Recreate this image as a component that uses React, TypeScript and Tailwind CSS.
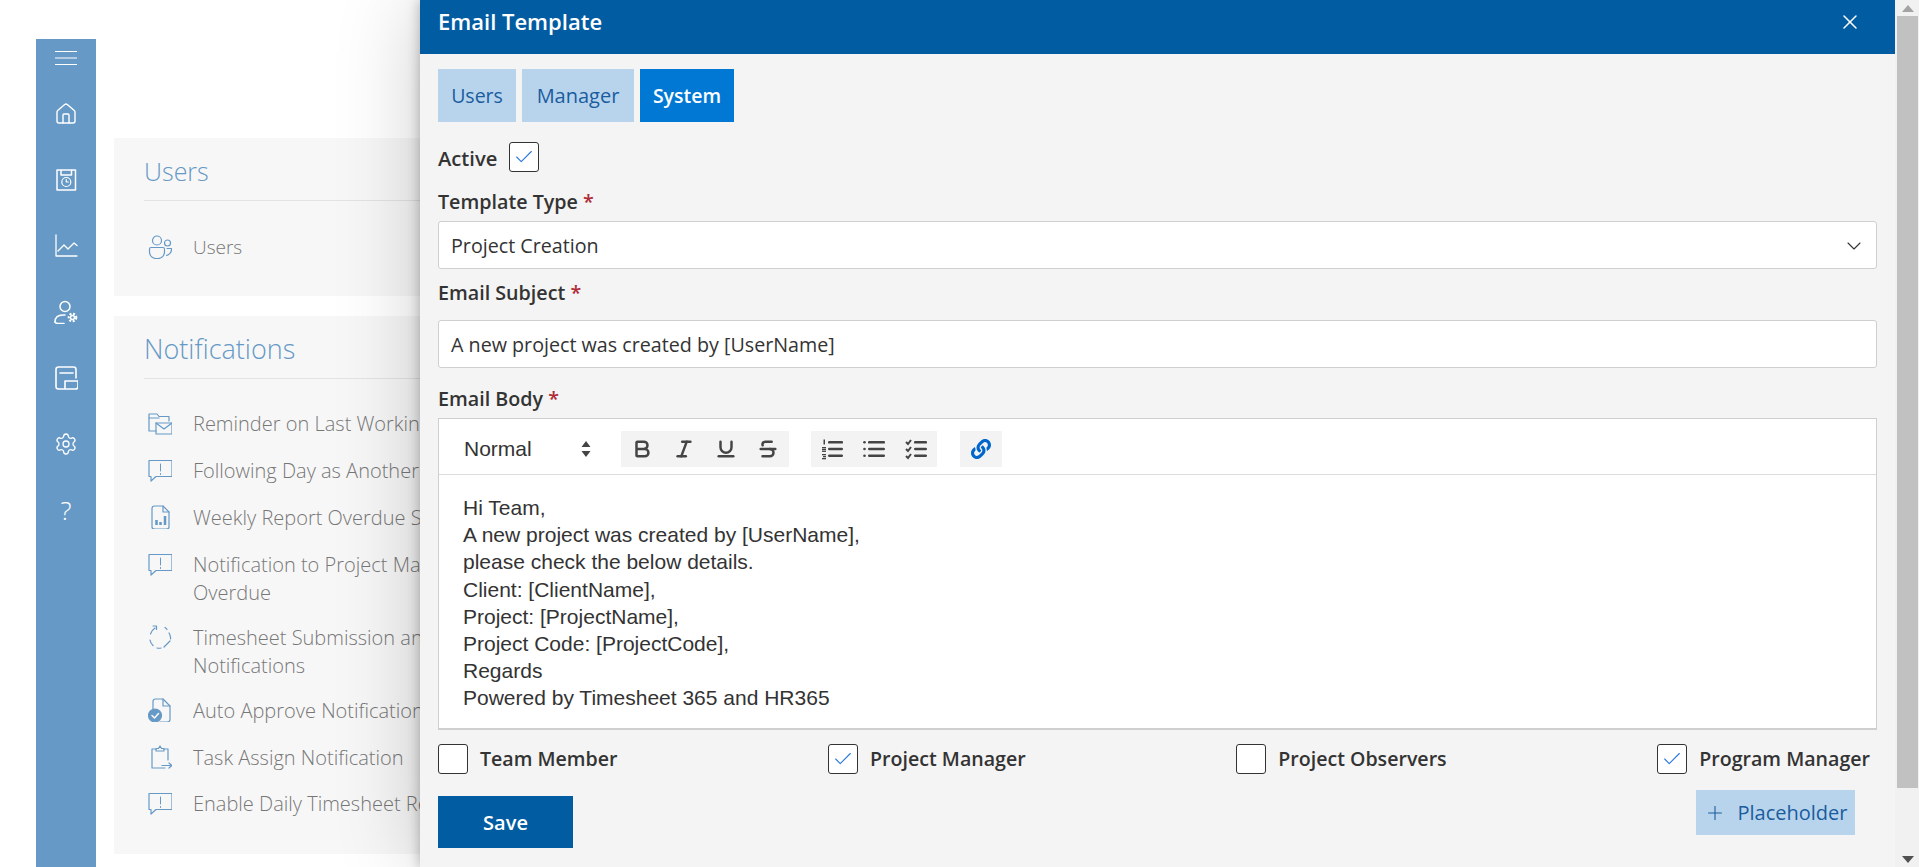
import React from 'react';
import { Home, Settings, Bold, Italic, Underline, Strikethrough, ChevronDown, X, Plus, Check } from 'lucide-react';
import { FaLink } from 'react-icons/fa';

const S = (p: { children: React.ReactNode; size?: number; vb?: number; w?: number }) => (
  <svg width={p.size ?? 24} height={p.size ?? 24} viewBox={`0 0 ${p.vb ?? 24} ${p.vb ?? 24}`} fill="none" stroke="currentColor" strokeWidth={p.w ?? 1.2} strokeLinecap="round" strokeLinejoin="round">{p.children}</svg>
);

const Bubble = () => (
  <S>
    <path d="M1 2.500h23v16H8l-5 4.500v-4.500H1z" />
    <path d="M12.500 6v7M12.500 15.500v1" strokeWidth={1} />
  </S>
);
const MailFolder = () => (
  <S>
    <path d="M1 20V3h8l2 2.500h10V10M1 20h7" />
    <path d="M1 7h10" />
    <rect x="8" y="12" width="16" height="11" />
    <path d="M8 12l8 6 8-6" />
  </S>
);
const ReportDoc = () => (
  <S>
    <path d="M4 3.500Q4 1 6.500 1H15l6 6v15Q21 24 18.500 24h-12Q4 24 4 22z" />
    <path d="M15 1v6h6" />
    <path d="M8.500 20v-5M12.500 20v-3M17 20v-9" strokeWidth={2.500} strokeLinecap="butt" />
  </S>
);
const DashCircle = () => (
  <S>
    <path d="M2.500 9A11 11 0 0 1 7 3M2 15q.5 3 3 5.500M9 23q2 .5 4 0M21 8q2 3 1.500 6M17 2.500q1 .5 2 2M16 22l6-6" />
    <path d="M5 1h3.500v3.500" />
  </S>
);
const ApproveDoc = () => (
  <S>
    <path d="M5 11V3.500Q5 1 7.500 1H15l7 7v13.500Q22 24 19 24h-7" />
    <path d="M15 1v7h7" />
    <circle cx="7" cy="17.500" r="6.500" fill="currentColor" />
    <path d="M4 17.500l2.500 2.500 4-4.500" stroke="#f7f7f7" strokeWidth={1.600} />
  </S>
);
const TaskAssign = () => (
  <S>
    <path d="M8 4H4v19h13M20 15V4h-4" />
    <path d="M8 6V3.500h2.500L12 1l1.500 2.500H16V6z" />
    <path d="M14 20.500h10M21 18l3 2.500-3 2.500" />
  </S>
);
const UsersIcon = () => (
  <S>
    <circle cx="9" cy="5.500" r="4.500" />
    <circle cx="19.500" cy="8" r="3" />
    <path d="M1.500 14q0-1.500 1.500-1.500h12q1.500 0 1.500 1.500v3a6.500 6.500 0 0 1-6.500 6.500H8A6.500 6.500 0 0 1 1.500 17zM19 13.500h4.500q.5 5-5 7" />
  </S>
);

const rows: { icon: React.ReactNode; lines: string[]; h: string }[] = [
  { icon: <MailFolder />, lines: ['Reminder on Last Working'], h: 'h-[47px]' },
  { icon: <Bubble />, lines: ['Following Day as Another'], h: 'h-[47px]' },
  { icon: <ReportDoc />, lines: ['Weekly Report Overdue Submission'], h: 'h-[47px]' },
  { icon: <Bubble />, lines: ['Notification to Project Manager', 'Overdue'], h: 'h-[73px]' },
  { icon: <DashCircle />, lines: ['Timesheet Submission and', 'Notifications'], h: 'h-[73px]' },
  { icon: <ApproveDoc />, lines: ['Auto Approve Notification'], h: 'h-[47px]' },
  { icon: <TaskAssign />, lines: ['Task Assign Notification'], h: 'h-[46px]' },
  { icon: <Bubble />, lines: ['Enable Daily Timesheet Reminder'], h: 'h-[46px]' },
];

const Row = ({ icon, lines, h }: { icon: React.ReactNode; lines: string[]; h: string }) => (
  <div className={`flex items-start ${h} pt-[12px]`}>
    <div className="w-[49px] pl-[4px] pt-[2px] text-[#6699c6] shrink-0">{icon}</div>
    <div className="w-[227px] overflow-hidden text-[20px] leading-[28px] pt-[1px] font-light text-[#777] whitespace-nowrap">
      {lines.map((l) => <div key={l}>{l}</div>)}
    </div>
  </div>
);

const Box = ({ on }: { on?: boolean }) => (
  <span className="flex items-center justify-center bg-white border border-[#333] rounded-[3px] shrink-0 w-[30px] h-[30px]">
    {on && <Check size={22} strokeWidth={1.200} className="text-[#2a78e0]" />}
  </span>
);

const Star = () => <span className="text-[#b02a37]"> *</span>;

const Tool = ({ children, w }: { children: React.ReactNode; w: string }) => (
  <span className={`flex items-center justify-center h-[36px] ${w} text-[#444]`}>{children}</span>
);

const OrderedIcon = () => (
  <svg width="22" height="22" viewBox="0 0 22 22"><g fill="#444"><rect x="7" y="3" width="15" height="2.600" rx="1.200" /><rect x="7" y="9.700" width="15" height="2.600" rx="1.200" /><rect x="7" y="16.400" width="15" height="2.600" rx="1.200" /><rect x="2.500" y="1.500" width="1.500" height="5" /><rect x="1" y="9" width="4" height="1.300" /><rect x="1" y="10.800" width="4" height="1.300" /><rect x="1" y="12.600" width="4" height="1.300" /><rect x="1" y="16" width="4" height="1.300" /><rect x="2" y="18" width="3" height="1.300" /><rect x="1" y="20" width="4" height="1.300" /></g></svg>
);
const BulletIcon = () => (
  <svg width="22" height="22" viewBox="0 0 22 22"><g fill="#444"><rect x="5" y="3" width="17" height="2.600" rx="1.200" /><rect x="5" y="9.700" width="17" height="2.600" rx="1.200" /><rect x="5" y="16.400" width="17" height="2.600" rx="1.200" /><circle cx="1.500" cy="4.300" r="1.300" /><circle cx="1.500" cy="11" r="1.300" /><circle cx="1.500" cy="17.700" r="1.300" /></g></svg>
);
const CheckListIcon = () => (
  <svg width="22" height="22" viewBox="0 0 22 22"><g fill="#444"><rect x="9" y="3" width="13" height="2.600" rx="1.200" /><rect x="9" y="9.700" width="13" height="2.600" rx="1.200" /><rect x="9" y="16.400" width="13" height="2.600" rx="1.200" /></g><g fill="none" stroke="#444" strokeWidth="2"><path d="M1 4l2 2 3-4M1 11l2 2 3-4M1 18l2 2 3-4" /></g></svg>
);

const RoleCheck = ({ label, on }: { label: string; on?: boolean }) => (
  <label className="flex items-center gap-[12px]">
    <Box on={on} />
    <span className="text-[19.600px] font-[550] text-[#333] whitespace-nowrap">{label}</span>
  </label>
);

export default function App() {
  return (
    <div className="flex h-[867px] w-full overflow-hidden bg-white text-[#333] font-['Open_Sans',sans-serif]">
      <div className="relative flex-1 flex min-w-0 overflow-hidden">
        {/* Background page */}
        <aside className="ml-[36px] mt-[39px] w-[60px] h-[828px] bg-[#6699c6] text-white flex flex-col items-center shrink-0">
          <div className="h-[42px] pb-[4px] flex items-center justify-center">
            <svg width="22" height="16" viewBox="0 0 22 16" stroke="currentColor" strokeWidth="1.200"><path d="M0 1.500h22M0 8h22M0 14.500h22" /></svg>
          </div>
          <div className="h-[66px] flex items-center justify-center"><Home size={24} strokeWidth={1.400} /></div>
          <div className="h-[66px] pb-[2px] flex items-center justify-center">
            <S size={24}><path d="M3 3h18.500v20H3zM7 3v5h10.500V3" strokeWidth={1.500} /><circle cx="12.300" cy="15" r="4.500" /><path d="M12.300 12.500V15h2" /></S>
          </div>
          <div className="h-[66px] flex items-center justify-center">
            <S size={24}><path d="M2 1v21h21M4 17l6-6 4 4 6-6 3 2.500" strokeWidth={1.300} /></S>
          </div>
          <div className="h-[66px] flex items-center justify-center">
            <S size={24}><circle cx="11" cy="6.500" r="5" strokeWidth={1.500} /><path d="M1 22q0-7 8-7h2" strokeWidth={1.500} /><path d="M1 22q1 1.500 3 1.500h6" strokeWidth={1.500} /><circle cx="18.500" cy="17.500" r="2.800" fill="currentColor" stroke="none" /><circle cx="18.500" cy="17.500" r="3.800" strokeWidth={2} strokeDasharray="2 1.600" strokeLinecap="butt" /><circle cx="18.500" cy="17.500" r="1.200" fill="#6699c6" stroke="none" /></S>
          </div>
          <div className="h-[66px] flex items-center justify-center">
            <S size={24}><path d="M22 12V3.500Q22 1 19.500 1h-15Q2 1 2 3.500v17Q2 23 4.500 23h17Q24 23 24 20.500V15H11v8" strokeWidth={1.600} /><path d="M6 7h13" strokeWidth={1.600} /></S>
          </div>
          <div className="h-[66px] flex items-center justify-center"><Settings size={24} strokeWidth={1.300} /></div>
          <div className="h-[66px] flex items-center justify-center text-[26px] font-light">?</div>
        </aside>

        <main className="ml-[18px] mt-[138px] w-[900px] shrink-0 flex flex-col gap-[20px]">
          <section className="h-[158px] bg-[#f7f7f7] px-[30px]">
            <h2 className="h-[63px] flex items-center pt-[5px] text-[25px] font-light text-[#6699c6] border-b border-[#e3e3e3]">Users</h2>
            <div className="flex items-center mt-[32px]">
              <div className="w-[49px] pl-[4px] text-[#6699c6]"><UsersIcon /></div>
              <span className="text-[19px] font-light text-[#777]">Users</span>
            </div>
          </section>
          <section className="h-[538px] bg-[#f7f7f7] px-[30px]">
            <h2 className="h-[63px] flex items-center pt-[5px] text-[27px] font-light text-[#6699c6] border-b border-[#e3e3e3]">Notifications</h2>
            <div className="pt-[18px]">
              {rows.map((r, i) => <Row key={i} {...r} />)}
            </div>
          </section>
        </main>

        {/* Slide-over panel */}
        <div className="absolute top-0 right-0 h-full w-[1475px] bg-[#f4f4f4] flex flex-col shadow-[0_0_12px_rgba(0,0,0,0.28),0_0_80px_rgba(0,0,0,0.2)]">
          <header className="h-[54px] bg-[#015ca1] text-white flex items-center justify-between pl-[18px] pr-[33px] pb-[10px] shrink-0">
            <h1 className="text-[22px] font-semibold pb-[2px]">Email Template</h1>
            <X size={24} strokeWidth={1.500} />
          </header>

          <div className="flex-1 px-[18px] flex flex-col">
            <div className="flex gap-[6px] mt-[15px]">
              <button className="h-[53px] w-[78px] pt-[1px] bg-[#b8d4ed] text-[#1a5c9e] text-[19.500px]">Users</button>
              <button className="h-[53px] w-[112px] pt-[1px] bg-[#b8d4ed] text-[#1a5c9e] text-[20px]">Manager</button>
              <button className="h-[53px] w-[94px] pt-[1px] bg-[#0078d4] text-white text-[19.500px] font-semibold">System</button>
            </div>

            <div className="flex items-center mt-[20px] h-[30px]">
              <span className="w-[71px] pt-[3px] text-[20.200px] font-[550]">Active</span>
              <Box on />
            </div>

            <label className="mt-[13px] h-[36px] pt-[1px] text-[19.700px] font-[550] leading-[32px]">Template Type<Star /></label>
            <div className="h-[48px] bg-white border border-[#cfcfcf] rounded-[3px] flex items-center justify-between pl-[12px] pr-[10px] pt-[1px] text-[19.700px]">
              <span>Project Creation</span>
              <ChevronDown size={24} strokeWidth={1.100} />
            </div>

            <label className="mt-[7px] h-[44px] pt-[1px] text-[19.700px] font-[550] leading-[32px]">Email Subject<Star /></label>
            <div className="h-[48px] bg-white border border-[#cfcfcf] rounded-[3px] flex items-center pl-[12px] pt-[1px] text-[19.700px]">
              A new project was created by [UserName]
            </div>

            <label className="mt-[14px] h-[36px] pt-[1px] text-[19.700px] font-[550] leading-[32px]">Email Body<Star /></label>
            <div className="h-[312px] bg-white border border-b-2 border-[#cfcfcf] flex flex-col">
              <div className="h-[56px] border-b border-[#dcdcdc] flex items-center pl-[25px] pt-[4px] shrink-0">
                <div className="w-[157px] flex items-center justify-between pr-[30px] text-[21px] font-['Liberation_Sans',sans-serif]">
                  <span>Normal</span>
                  <svg width="10" height="18" viewBox="0 0 10 18" fill="#444"><path d="M5 1l4.500 6h-9zM5 17l4.500-6h-9z" /></svg>
                </div>
                <div className="w-[168px] flex bg-[#f3f3f3] mr-[22px]">
                  <Tool w="w-[42px]"><Bold size={22} strokeWidth={2.700} /></Tool>
                  <Tool w="w-[42px]"><Italic size={22} strokeWidth={2.700} /></Tool>
                  <Tool w="w-[42px]"><Underline size={22} strokeWidth={2.700} /></Tool>
                  <Tool w="w-[42px]"><Strikethrough size={22} strokeWidth={2.700} /></Tool>
                </div>
                <div className="w-[126px] flex bg-[#f3f3f3] mr-[23px]">
                  <Tool w="w-[42px]"><OrderedIcon /></Tool>
                  <Tool w="w-[42px]"><BulletIcon /></Tool>
                  <Tool w="w-[42px]"><CheckListIcon /></Tool>
                </div>
                <div className="w-[42px] bg-[#f3f3f3]">
                  <Tool w="w-[42px]"><FaLink size={20} className="text-[#0066cc]" /></Tool>
                </div>
              </div>
              <div className="pl-[24px] pt-[19px] text-[21px] leading-[27.200px] font-['Liberation_Sans',sans-serif]">
                <p>Hi Team,</p>
                <p>A new project was created by [UserName],</p>
                <p>please check the below details.</p>
                <p>Client: [ClientName],</p>
                <p>Project: [ProjectName],</p>
                <p>Project Code: [ProjectCode],</p>
                <p>Regards</p>
                <p>Powered by Timesheet 365 and HR365</p>
              </div>
            </div>

            <div className="flex justify-between items-center mt-[14px] pr-[7px]">
              <RoleCheck label="Team Member" />
              <RoleCheck label="Project Manager" on />
              <RoleCheck label="Project Observers" />
              <RoleCheck label="Program Manager" on />
            </div>

            <div className="flex justify-between items-start mt-[16px] pr-[22px]">
              <button className="mt-[6px] h-[52px] w-[135px] pt-[1px] bg-[#015ca1] text-white text-[20px] font-semibold">Save</button>
              <button className="h-[45px] w-[159px] bg-[#b8d4ed] text-[#1a5c9e] text-[20px] flex items-center justify-center gap-[12px]">
                <Plus size={22} strokeWidth={1.200} />
                <span>Placeholder</span>
              </button>
            </div>
          </div>
        </div>
      </div>

      {/* Page scrollbar */}
      <div className="w-[24px] h-full bg-[#f1f1f1] pl-[2px] pr-[1px] flex flex-col items-stretch shrink-0">
        <div className="h-[16px] flex items-center justify-center">
          <svg width="12" height="7" viewBox="0 0 12 7" fill="#a3a3a3"><path d="M6 0l6 7H0z" /></svg>
        </div>
        <div className="h-[772px] bg-[#c1c1c1]" />
        <div className="flex-1" />
        <div className="h-[16px] flex items-center justify-center">
          <svg width="12" height="7" viewBox="0 0 12 7" fill="#505050"><path d="M6 7l6-7H0z" /></svg>
        </div>
      </div>
    </div>
  );
}
